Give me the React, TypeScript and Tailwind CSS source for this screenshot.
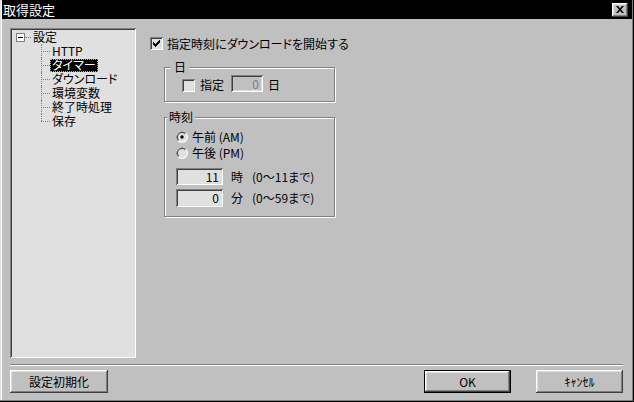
import React from "react";

const sunken =
  "shadow-[inset_1px_1px_0_#808080,inset_-1px_-1px_0_#ffffff,inset_2px_2px_0_#404040,inset_-2px_-2px_0_#dfdfdf]";
const raised =
  "shadow-[inset_-1px_-1px_0_#404040,inset_1px_1px_0_#ffffff,inset_-2px_-2px_0_#808080,inset_2px_2px_0_#dfdfdf]";

function CheckBox({ checked }: { checked?: boolean }) {
  return (
    <div className={`flex h-[13px] w-[13px] shrink-0 items-center justify-center bg-[#e0e0e0] ${sunken}`}>
      {checked && (
        <svg width="7" height="7" viewBox="0 0 7 7">
          <path d="M0 2h1v1h1v1h1V3h1V2h1V1h1V0h1v3H6v1H5v1H4v1H3v1H2V6H1V5H0z" fill="#000" />
        </svg>
      )}
    </div>
  );
}

function Radio({ checked }: { checked?: boolean }) {
  return (
    <svg width="12" height="12" viewBox="0 0 12 12" className="shrink-0">
      <circle cx="6" cy="6" r="6" fill="#ffffff" />
      <path d="M1.76 10.24A6 6 0 0 1 10.24 1.76z" fill="#808080" />
      <circle cx="6" cy="6" r="5" fill="#dfdfdf" />
      <path d="M2.46 9.54A5 5 0 0 1 9.54 2.46z" fill="#404040" />
      <circle cx="6" cy="6" r="4" fill="#e0e0e0" />
      {checked && <circle cx="6" cy="6" r="1.7" fill="#000" />}
    </svg>
  );
}

function TextBox({ value, width, height, disabled }: { value: string; width: string; height: string; disabled?: boolean }) {
  return (
    <div
      className={`flex items-center justify-end pr-[4px] ${width} ${height} ${sunken} ${
        disabled ? "bg-[#c0c0c0] text-[#808080]" : "bg-[#e0e0e0] text-black"
      }`}
    >
      {value}
    </div>
  );
}

function Button({ label, width, isDefault }: { label: string; width: string; isDefault?: boolean }) {
  return (
    <div className={`h-[23px] ${width} ${isDefault ? "border border-black" : ""}`}>
      <div className={`flex h-full w-full items-center justify-center bg-[#c0c0c0] ${raised}`}>{label}</div>
    </div>
  );
}

function TreeChild({ label, last, selected }: { label: string; last?: boolean; selected?: boolean }) {
  return (
    <div className="flex h-[14px] items-center">
      <div className="relative ml-[29px] h-full w-[9px]">
        <div
          className={`absolute left-0 top-0 border-l border-dotted border-[#808080] ${last ? "h-[7px]" : "h-full"}`}
        />
        <div className="absolute left-0 top-[7px] w-[9px] border-t border-dotted border-[#808080]" />
      </div>
      <span
        className={`flex h-[13px] items-center px-[2px] ${
          selected ? "bg-black text-white outline outline-1 outline-dotted outline-[#c0c040] -outline-offset-1" : ""
        }`}
      >
        {label}
      </span>
    </div>
  );
}

export default function App() {
  const children = ["HTTP", "タイマー", "ダウンロード", "環境変数", "終了時処理", "保存"];

  return (
    <div
      className={`flex h-[402px] w-[634px] flex-col bg-[#c0c0c0] px-[2px] pb-[2px] font-['Noto_Sans_CJK_JP','Noto_Sans_CJK_SC',sans-serif] text-[12px] leading-[12px] text-black [font-feature-settings:'palt'] shadow-[inset_-1px_-1px_0_#000000,inset_-2px_-2px_0_#808080,inset_1px_1px_0_#dfdfdf,inset_2px_2px_0_#ffffff]`}
    >
      {/* title bar */}
      <div className="flex h-[19px] shrink-0 items-center justify-between bg-black pl-[1px] pr-[4px]">
        <span className="text-[13px] text-white">取得設定</span>
        <div className={`flex h-[14px] w-[16px] items-center justify-center bg-[#c0c0c0] ${raised}`}>
          <svg width="8" height="7" viewBox="0 0 8 7">
            <path d="M0 0h2l2 2.2L6 0h2L5 3.5 8 7H6L4 4.8 2 7H0l3-3.5z" fill="#000" />
          </svg>
        </div>
      </div>

      {/* body */}
      <div className="flex pl-[8px] pt-[9px]">
        <div className={`h-[330px] w-[126px] shrink-0 bg-[#e0e0e0] p-[2px] ${sunken}`}>
          <div className="flex h-[14px] items-center">
            <div className="ml-[4px] flex h-[9px] w-[9px] items-center justify-center border border-[#808080] bg-white">
              <div className="h-px w-[5px] bg-black" />
            </div>
            <div className="w-[6px] border-t border-dotted border-[#808080]" />
            <span className="px-[2px]">設定</span>
          </div>
          {children.map((c, i) => (
            <TreeChild key={c} label={c} selected={c === "タイマー"} last={i === children.length - 1} />
          ))}
        </div>

        <div className="ml-[14px] pt-[9px]">
          <div className="flex h-[13px] items-center gap-[4px]">
            <CheckBox checked />
            <span>指定時刻にダウンロードを開始する</span>
          </div>

          {/* 日 */}
          <div className="relative ml-[14px] mt-[17px] h-[35px] w-[171px] border border-[#808080] shadow-[1px_1px_0_#ffffff,inset_1px_1px_0_#ffffff]">
            <span className="absolute left-[6px] top-[-7px] bg-[#c0c0c0] px-[3px]">日</span>
            <div className="mt-[7px] flex h-[17px] items-center pl-[17px]">
              <div className="mt-[4px]">
                <CheckBox />
              </div>
              <span className="ml-[5px] mt-[3px]">指定</span>
              <div className="ml-[7px]">
                <TextBox value="0" width="w-[32px]" height="h-[17px]" disabled />
              </div>
              <span className="ml-[5px] mt-[2px]">日</span>
            </div>
          </div>

          {/* 時刻 */}
          <div className="relative ml-[14px] mt-[15px] h-[100px] w-[171px] border border-[#808080] pl-[11px] pt-[13px] shadow-[1px_1px_0_#ffffff,inset_1px_1px_0_#ffffff]">
            <span className="absolute left-[2px] top-[-7px] bg-[#c0c0c0] px-[2px]">時刻</span>
            <div className="flex h-[12px] items-center gap-[4px]">
              <Radio checked />
              <span>午前 (AM)</span>
            </div>
            <div className="mt-[4px] flex h-[12px] items-center gap-[4px]">
              <Radio />
              <span>午後 (PM)</span>
            </div>
            <div className="mt-[9px] flex items-center">
              <TextBox value="11" width="w-[47px]" height="h-[17px]" />
              <span className="ml-[8px]">時</span>
              <span className="ml-[9px]">(0〜11まで)</span>
            </div>
            <div className="mt-[4px] flex items-center">
              <TextBox value="0" width="w-[47px]" height="h-[18px]" />
              <span className="ml-[8px]">分</span>
              <span className="ml-[9px]">(0〜59まで)</span>
            </div>
          </div>
        </div>
      </div>

      {/* separator */}
      <div className="ml-[8px] mr-[9px] mt-[6px] h-[2px] border-t border-b border-t-[#808080] border-b-white" />

      {/* buttons */}
      <div className="ml-[8px] mr-[9px] mt-[4px] flex items-center">
        <Button label="設定初期化" width="w-[98px]" />
        <div className="flex-1" />
        <Button label="OK" width="w-[87px]" isDefault />
        <div className="ml-[25px]">
          <Button label="ｷｬﾝｾﾙ" width="w-[87px]" />
        </div>
      </div>
    </div>
  );
}
